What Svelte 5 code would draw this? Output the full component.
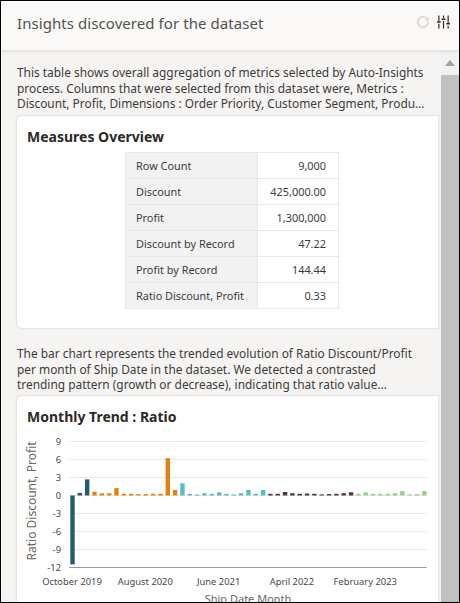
<script lang="ts">
  const measures = [
    ['Row Count', '9,000'],
    ['Discount', '425,000.00'],
    ['Profit', '1,300,000'],
    ['Discount by Record', '47.22'],
    ['Profit by Record', '144.44'],
    ['Ratio Discount, Profit', '0.33'],
  ];

  const values = [
    -11.4, 0.35, 2.6, 0.55, 0.28, 0.28, 1.15, 0.2, 0.2, 0.15, 0.15, 0.2, 0.2, 6.15, 0.85, 1.95, 0.2,
    0.1, 0.3, 0.2, 0.45, 0.2, 0.1, 0.3, 0.85, 0.2, 0.85, 0.2, 0.2, 0.5, 0.3, 0.2, 0.25, 0.2, 0.1,
    0.15, 0.2, 0.3, 0.45, 0.2, 0.45, 0.2, 0.2, 0.2, 0.3, 0.65, 0.1, 0.15, 0.65,
  ];

  // chart geometry, in svg px
  const unit = 6;
  const zeroY = 63.5;
  const ticks = [9, 6, 3, 0, -3, -6, -9];
  const xLabels = [
    ['October 2019', 0],
    ['August 2020', 10],
    ['June 2021', 20],
    ['April 2022', 30],
    ['February 2023', 40],
  ] as const;

  function barX(i: number) {
    return 53.3 + i * 7.33;
  }

  function barColor(i: number) {
    if (i < 3) return '#235f66';
    if (i < 15) return '#e08214';
    if (i < 27) return '#5dbdb9';
    if (i < 39) return '#4a3a33';
    return '#9ccc8a';
  }
</script>

<div class="panel">
  <header class="header">
    <h1>Insights discovered for the dataset</h1>
    <div class="actions">
      <svg class="icon" viewBox="0 0 14 14" aria-hidden="true">
        <path d="M11.6 4.6A5.2 5.2 0 1 0 12.2 7" fill="none" stroke="#dcdad7" stroke-width="1.8" />
        <path d="M12.9 1.8v4h-4z" fill="#dcdad7" />
      </svg>
      <svg class="icon sliders" viewBox="0 0 14 14" aria-hidden="true">
        <path
          d="M2 0v6M2 9v5M7 0v3M7 6v8M12 0v8M12 11v3"
          fill="none"
          stroke="#2b2a28"
          stroke-width="1.3"
        />
        <path d="M0 6.2h4v1.6H0zM5 3.2h4v1.6H5zM10 8.2h4v1.6h-4z" fill="#2b2a28" />
      </svg>
    </div>
  </header>

  <div class="content">
    <main class="scroll">
      <p class="desc">
        This table shows overall aggregation of metrics selected by Auto-Insights process. Columns
        that were selected from this dataset were, Metrics : Discount, Profit, Dimensions : Order
        Priority, Customer Segment, Product Category, Ship Mode
      </p>
      <section class="card table-card">
        <h2>Measures Overview</h2>
        <table>
          <tbody>
            {#each measures as [label, value]}
              <tr>
                <th scope="row">{label}</th>
                <td>{value}</td>
              </tr>
            {/each}
          </tbody>
        </table>
      </section>

      <p class="desc">
        The bar chart represents the trended evolution of Ratio Discount/Profit per month of Ship
        Date in the dataset. We detected a contrasted trending pattern (growth or decrease),
        indicating that ratio value changes noticeably over time
      </p>
      <section class="card chart-card">
        <h2>Monthly Trend : Ratio</h2>
        <svg class="chart" width="420" height="160" viewBox="0 0 420 160">
          <text class="axis-title side" transform="translate(19 69) rotate(-90)" text-anchor="middle">
            Ratio Discount, Profit
          </text>
          {#each ticks as t}
            <line x1="52" x2="409.7" y1={zeroY - t * unit} y2={zeroY - t * unit} class="grid" />
            <text class="tick" x="44" y={zeroY - t * unit + 3.5} text-anchor="end">{t}</text>
          {/each}
          <text class="tick" x="44" y={zeroY + 72 + 3.5} text-anchor="end">-12</text>
          <line x1="52" x2="409.7" y1={zeroY + 72} y2={zeroY + 72} class="axis" />
          {#each values as v, i}
            <rect
              x={barX(i)}
              y={v > 0 ? zeroY - v * unit - 0.5 : zeroY}
              width="4.4"
              height={Math.abs(v) * unit + 0.5}
              fill={barColor(i)}
            />
          {/each}
          {#each xLabels as [label, i]}
            <text class="tick" x={barX(i) + 1.7} y={zeroY + 89} text-anchor="middle">{label}</text>
          {/each}
          <text class="axis-title" x="231" y="171" text-anchor="middle">Ship Date Month</text>
        </svg>
      </section>
    </main>

    <div class="scrollbar" aria-hidden="true">
      <div class="arrow"></div>
      <div class="thumb"></div>
    </div>
  </div>
</div>

<style>
  :global(body) {
    margin: 0;
    background: #fff;
  }

  .panel {
    box-sizing: border-box;
    width: 460px;
    height: 603px;
    display: flex;
    flex-direction: column;
    overflow: hidden;
    border: 1px solid #000;
    background: #f5f4f2;
    color: #2b2a28;
    font-family: 'Noto Sans', sans-serif;
  }

  .header {
    flex: none;
    height: 49px;
    padding: 0 9px 0 16px;
    display: flex;
    align-items: center;
    justify-content: space-between;
    background: #faf9f7;
    box-shadow: 0 1px 4px rgba(0, 0, 0, 0.12);
    position: relative;
  }

  .header h1 {
    margin: 0 0 6px;
    font-size: 15px;
    font-weight: 400;
    letter-spacing: 0.07px;
    color: #54524f;
  }

  .actions {
    display: flex;
    align-items: center;
    gap: 7px;
    margin-bottom: 7px;
  }

  .icon {
    width: 14px;
    height: 14px;
  }

  .sliders {
    width: 13px;
  }

  .content {
    flex: 1;
    min-height: 0;
    display: flex;
  }

  .scroll {
    flex: 1;
    min-width: 0;
    overflow: hidden;
    padding: 15px 1px 0 15px;
  }

  .desc {
    width: 409px;
    margin: 0 0 3px 1px;
    font-size: 11.9px;
    line-height: 15.5px;
    height: 47px;
    overflow: hidden;
    display: -webkit-box;
    -webkit-line-clamp: 3;
    -webkit-box-orient: vertical;
    color: #3d3b39;
  }

  .card {
    box-sizing: border-box;
    background: #fff;
    border: 1px solid #e8e5e1;
    border-radius: 6px 0 0 6px;
    box-shadow: 0 0 3px rgba(0, 0, 0, 0.05);
  }

  .card h2 {
    margin: 0;
    padding: 11px 0 0 10px;
    font-size: 14px;
    line-height: 20px;
    font-weight: 700;
    color: #2b2a28;
  }

  .table-card {
    height: 214px;
    margin-bottom: 17px;
  }

  table {
    margin: 5px 0 0 108px;
    width: 214px;
    border-collapse: collapse;
    font-size: 10.9px;
    color: #3d3b39;
  }

  tr {
    height: 26px;
  }

  th,
  td {
    padding: 0 12px 0 10px;
    border: 1px solid #e8e8e8;
    white-space: nowrap;
  }

  th {
    width: 109px;
    text-align: left;
    font-weight: 400;
    background: #f2f2f2;
  }

  td {
    text-align: right;
    background: #fff;
  }

  .chart-card {
    margin-top: -1px;
    border-radius: 6px 0 0 0;
    height: 240px;
  }

  .chart {
    display: block;
    margin-top: 5px;
    overflow: visible;
  }

  .grid {
    stroke: #e9e9e9;
    stroke-width: 1;
  }

  .axis {
    stroke: #9a9a9a;
    stroke-width: 1;
  }

  .tick {
    font-size: 9.4px;
    fill: #4a4846;
  }

  .axis-title {
    font-size: 11px;
    fill: #6b6967;
  }

  .side {
    font-size: 12px;
  }

  .scrollbar {
    flex: none;
    width: 18px;
    margin-left: 1px;
    display: flex;
    flex-direction: column;
    background: #f1f1f1;
  }

  .arrow {
    flex: none;
    height: 25px;
    position: relative;
  }

  .arrow::after {
    content: '';
    position: absolute;
    left: 4px;
    top: 10px;
    border-left: 5.5px solid transparent;
    border-right: 5.5px solid transparent;
    border-bottom: 6px solid #a3a3a3;
  }

  .thumb {
    flex: 1;
    background: #c1c1c1;
  }
</style>
